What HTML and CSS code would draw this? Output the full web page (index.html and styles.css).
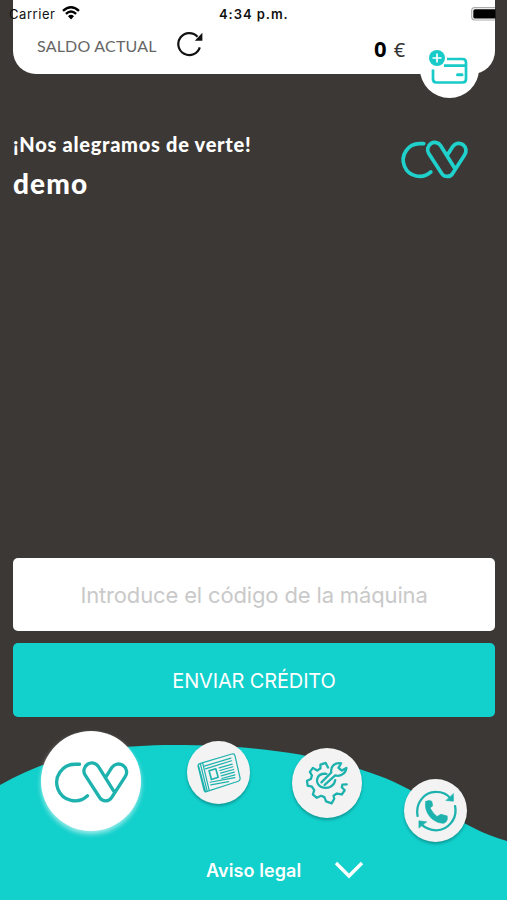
FILE: index.html
```html
<!DOCTYPE html>
<html lang="es">
<head>
<meta charset="utf-8">
<meta name="viewport" content="width=device-width">
<title>Saldo actual</title>
<link rel="stylesheet" href="styles.css">
</head>
<body>
<svg class="defs" width="0" height="0">
  <symbol id="cv" viewBox="155 115 235 140">
    <path d="M238 130H224A55 55 0 1 0 262 225M295 137A23.500 23.500 0 0 0 255 163L299 231A21.500 21.500 0 0 0 335 230L375 168A23.500 23.500 0 0 0 336 139L319 166M295 137L341 211"/>
  </symbol>
</svg>
<main class="phone">
  <header class="top">
    <div class="status">
      <span class="carrier">Carrier</span>
      <svg class="wifi" width="18" height="14" viewBox="0 0 18 14"><path d="M1 4.800Q9-2.200 17 4.800M3.900 7.800Q9 3.200 14.100 7.800"/><path class="dot" d="M6 10.200Q9 7.500 12 10.200L9 13.500Z"/></svg>
      <span class="time">4:34 p.m.</span>
      <svg class="battery" width="28" height="14" viewBox="0 0 28 14"><path class="case" d="M24 .7H3.700Q.7 .7 .7 3.700V10Q.7 13 3.700 13H24"/><path d="M4 2.300H24.500V11.500H4Q2.300 11.500 2.300 10V4Q2.300 2.300 4 2.300Z"/></svg>
    </div>
    <div class="balance">
      <span class="label">SALDO ACTUAL</span>
      <svg class="reload" width="26" height="26" viewBox="0 0 26 26"><path class="ring" d="M22.800 16.300A11 11 0 1 1 20.500 5.700"/><path d="M25.400 1.800V9.800H17.800Z"/></svg>
      <span class="amount"><b>0</b> €</span>
    </div>
    <div class="card-button">
      <svg width="40" height="36" viewBox="0 0 40 36"><path class="card" d="M19 10H34.500Q38 10 38 13.500V30Q38 33.500 34.500 33.500H8.500Q5 33.500 5 30V20.500M16 16.700H37"/><path class="chip" d="M29.500 25.700h4.500"/><circle cx="9" cy="9" r="8"/><path class="plus" d="M9 4.500V13.500M4.500 9H13.500"/></svg>
    </div>
  </header>
  <section class="welcome">
    <div>
      <p class="greeting">¡Nos alegramos de verte!</p>
      <p class="name">demo</p>
    </div>
    <svg class="brand"><use href="#cv"/></svg>
  </section>
  <section class="form">
    <div class="field"><span>Introduce el código de la máquina</span></div>
    <div class="send"><span>ENVIAR CRÉDITO</span></div>
  </section>
  <footer class="bottom">
    <svg class="wave" width="507" height="160" viewBox="0 740 507 160"><path d="M0 785C48 758 98 745 174 745C259 745 325 755 385 778C432 797 459 828 507 841V900H0Z"/></svg>
    <nav class="menu">
      <div class="bubble home"><svg class="home-logo"><use href="#cv"/></svg></div>
      <div class="bubble news">
        <svg width="46" height="42" viewBox="21 16 137 125"><path d="M34 50L128 22Q135 20 137 27L152 92Q154 100 147 103L52 134Q47 136 45 130L27 58Q26 52 34 50ZM28 55L49 132M34 51L54 131M41 49L60 129"/><path d="M46 58L125 34M49 66L127 42M90 63L129 52M92 71L131 60M94 79L133 68M96 87L135 76M98 95L137 84M63 106L137 92M65 114L118 104"/><path class="photo" d="M60 72L80 66L87 91L67 98Z"/></svg>
      </div>
      <div class="bubble settings">
        <svg width="44" height="44" viewBox="90 78 130 134"><path d="M158 98L151 84L135 89L135 101L125 107L112 99L103 111L109 122L106 133L94 138L96 153L109 156L116 167L112 180L124 190L137 184L147 188L152 201L169 207L177 193L175 184L185 177L200 180L209 167L200 158L202 150L215 149M153 117C121 114 117 146 137 157C161 166 178 151 180 136M148 151L180 122C197 127 213 114 214 99L200 107L190 99L198 85C179 82 165 93 168 113L138 143"/></svg>
      </div>
      <div class="bubble call">
        <svg width="44" height="44" viewBox="84 70 132 134"><path d="M94 152C87 116 112 78 151 79Q178 79 194 98M208 122C216 161 187 195 151 196Q124 195 105 178"/><path class="solid" d="M203 85V107L181 105ZM98 188V167L121 170Z"/><path class="solid" d="M119 108Q127 102 137 107L140 121L132 128Q140 144 153 154L165 147L184 152Q187 169 174 174C143 176 111 142 119 108Z"/></svg>
      </div>
    </nav>
    <div class="legal"><span>Aviso legal</span><svg width="30" height="19" viewBox="0 0 30 19"><path d="M2 2L15 15L28 2"/></svg></div>
  </footer>
</main>
</body>
</html>
```
FILE: styles.css
```css
* { box-sizing: border-box; }
body { margin: 0; background: #3c3835; }
p { margin: 0; }
svg { display: block; flex: none; fill: none; }
span, p { white-space: nowrap; }
.defs { position: absolute; }
.phone { width: 507px; height: 900px; display: flex; flex-direction: column; overflow: hidden; background: #3c3835; color: #fff; font-family: Inter, sans-serif; }

.top { position: relative; height: 74px; margin: 0 12px 0 13px; background: #fff; border-radius: 0 0 23px 23px; color: #111; }
.status { display: flex; height: 28px; align-items: center; margin: 0 -12px 0 -4px; font-size: 13px; }
.carrier { width: 47px; letter-spacing: .55px; }
.wifi { margin: -2px 0 0 6px; stroke: #000; stroke-width: 2.400; }
.wifi .dot { fill: #000; stroke: none; }
.time { margin-left: 139px; width: 70px; font-weight: 600; letter-spacing: .95px; }
.battery { margin: -1px 8px 0 auto; fill: #000; }
.battery .case { fill: none; stroke: #aaa; stroke-width: 1.200; }
.balance { display: flex; align-items: center; height: 36px; padding-left: 24px; }
.label { width: 140px; font: 16px Lato, sans-serif; color: #666; letter-spacing: .2px; margin-top: -1px; }
.reload { margin-top: -4px; fill: #111; }
.reload .ring { fill: none; stroke: #111; stroke-width: 2.200; }
.amount { margin: 4px 0 0 171px; font: 20px "Noto Sans", sans-serif; color: #333; word-spacing: 2px; }
.amount b { font-size: 22px; color: #000; }
.card-button { position: absolute; left: 407px; top: 40px; width: 59px; height: 58px; padding: 9px 0 0 8px; border-radius: 50%; background: #fff; }
.card-button .card { stroke: #18cbc8; stroke-width: 2.700; }
.card-button .chip { stroke: #18cbc8; stroke-width: 3; stroke-linecap: round; }
.card-button circle { fill: #18cbc8; }
.card-button .plus { stroke: #fff; stroke-width: 1.700; }

.welcome { display: flex; justify-content: space-between; align-items: flex-start; padding: 57px 37px 0 13px; font-family: Lato, sans-serif; font-weight: 900; }
.greeting { font-size: 20px; line-height: 26px; letter-spacing: .72px; }
.name { font-size: 28px; line-height: 34px; margin-top: 9px; letter-spacing: 1.100px; }
.brand { width: 70px; height: 42px; margin: 8px 1px 0 0; stroke: #1fd0cb; stroke-width: 12.500; stroke-linecap: round; }

.form { margin: auto 12px 23px 13px; display: grid; gap: 12px; }
.field, .send { display: flex; align-items: center; justify-content: center; border-radius: 5px; }
.field { height: 73px; background: #fff; color: #c9c9c9; font-size: 22px; font-weight: 400; letter-spacing: -.15px; }
.send { height: 74px; padding-top: 2px; background: #12d0cc; font-size: 20px; font-weight: 400; letter-spacing: -.15px; }

.bottom { position: relative; height: 160px; flex: none; }
.wave { position: absolute; inset: 0; fill: #12d0cc; }
.menu { position: relative; display: flex; align-items: flex-start; height: 110px; padding-left: 41px; }
.bubble { display: flex; flex: none; align-items: center; justify-content: center; border-radius: 50%; background: #f3f3f3; box-shadow: 0 2px 3px #0004; stroke: #1eb2ae; }
.bubble svg { stroke-linejoin: round; stroke-linecap: round; stroke-width: 7; }
.home { width: 100px; height: 100px; margin-top: -9px; background: #fff; box-shadow: 0 3px 5px #fff9; }
.bubble .home-logo { width: 78px; height: 47px; margin-top: 2px; stroke-width: 10; }
.news { width: 63px; height: 63px; margin: 1px 0 0 46px; }
.news svg { stroke-width: 3.600; }
.news .photo { stroke-width: 5; }
.settings { width: 70px; height: 70px; margin: 8px 0 0 42px; }
.call { width: 63px; height: 63px; margin: 39px 0 0 42px; }
.call .solid { fill: #1eb2ae; stroke-width: 2; }
.legal { position: relative; display: flex; align-items: center; height: 40px; padding-left: 206px; font-size: 18px; font-weight: 600; }
.legal span { width: 128px; letter-spacing: .1px; }
.legal svg { stroke: #fff; stroke-width: 3.400; }
```
